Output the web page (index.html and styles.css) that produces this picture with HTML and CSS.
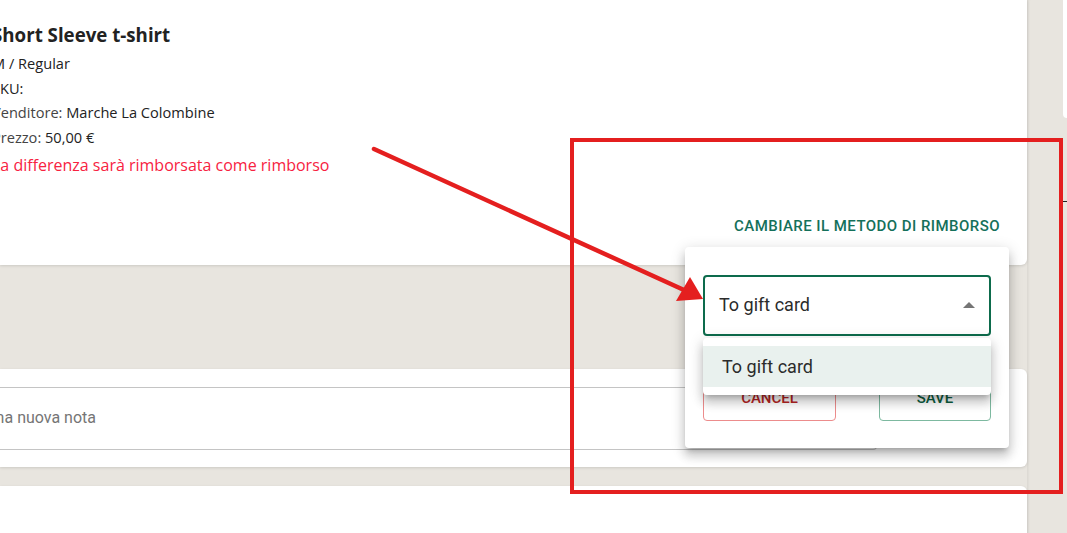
FILE: index.html
```html
<!DOCTYPE html>
<html lang="it">
<head>
    <meta charset="UTF-8">
    <meta name="viewport" content="width=device-width, initial-scale=1.0">
    <title>Reso ordine</title>
    <link rel="stylesheet" href="styles.css">
</head>
<body>
    <div class="page">
        <div class="main">
            <div class="card item-card">
                <div class="item-info">
                    <div class="item-title">Short Sleeve t-shirt</div>
                    <div class="item-line">M / Regular</div>
                    <div class="item-line">SKU:</div>
                    <div class="item-line"><span class="muted">Venditore:</span> Marche La Colombine</div>
                    <div class="item-line"><span class="muted">Prezzo:</span> 50,00 €</div>
                    <div class="item-warn">La differenza sarà rimborsata come rimborso</div>
                </div>
                <div class="item-actions">
                    <button class="link-btn">Cambiare il metodo di rimborso</button>
                </div>
            </div>

            <div class="card note-card">
                <div class="note-input">Aggiungi una nuova nota</div>
            </div>

            <div class="card last-card"></div>
        </div>
        <div class="side">
            <div class="side-panel"></div>
            <div class="side-tick"></div>
        </div>
    </div>

    <!-- popup del metodo di rimborso -->
    <div class="dialog">
        <div class="select">
            <span>To gift card</span>
            <span class="caret"></span>
        </div>
        <div class="dialog-buttons">
            <button class="btn btn-cancel">Cancel</button>
            <button class="btn btn-save">Save</button>
        </div>
        <div class="menu">
            <div class="menu-item">To gift card</div>
        </div>
    </div>

    <!-- annotazione rossa -->
    <svg class="markup" width="1067" height="533" viewBox="0 0 1067 533">
        <rect x="572" y="140" width="489" height="352" fill="none" stroke="#e41f1f" stroke-width="4"/>
        <line x1="374" y1="149" x2="684" y2="290" stroke="#e41f1f" stroke-width="4.5" stroke-linecap="round"/>
        <polygon points="703,299 676,301 690,277" fill="#e41f1f"/>
    </svg>
</body>
</html>
```

FILE: styles.css
```css
body {
    margin: 0;
    background-color: #e8e5df;
    font-family: "Open Sans", Arial, sans-serif;
    overflow: hidden;
}
.page {
    display: flex;
    height: 533px;
}
.main {
    width: 1027px;
    display: flex;
    flex-direction: column;
}
.card {
    background-color: white;
    border-radius: 0 6px 6px 0;
    box-shadow: 0 1px 3px rgba(0, 0, 0, 0.12);
}
.item-card {
    height: 265px;
    box-sizing: border-box;
    padding: 21px 27px 0 0;
    display: flex;
    flex-direction: column;
    border-radius: 0 0 6px 0;
}
.item-info {
    margin-left: -8px;
    color: #222;
}
.item-title {
    font-size: 18.7px;
    font-weight: 700;
    line-height: 28px;
    margin-bottom: 2px;
}
.item-line {
    font-size: 14.6px;
    line-height: 24.7px;
    color: #222;
}
.muted {
    color: #444;
}
.item-warn {
    font-size: 16px;
    line-height: 30px;
    color: #f7223f;
}
.item-actions {
    display: flex;
    justify-content: flex-end;
    margin-top: 37px;
}
.link-btn {
    background: none;
    border: none;
    padding: 0;
    font-family: Roboto, sans-serif;
    font-size: 15px;
    font-weight: 500;
    letter-spacing: 0.45px;
    text-transform: uppercase;
    color: #14705a;
    cursor: pointer;
}
.note-card {
    margin-top: 104px;
    height: 98px;
    box-sizing: border-box;
    padding-top: 18px;
}
.note-input {
    width: 971px;
    margin-left: -94px;
    box-sizing: border-box;
    height: 63px;
    border: 1px solid #c4c4c4;
    border-left: none;
    border-radius: 0 4px 4px 0;
    padding: 0 0 3px 14px;
    display: flex;
    align-items: center;
    font-family: Roboto, sans-serif;
    font-size: 16px;
    color: #757575;
}
.last-card {
    margin-top: 19px;
    flex: 1;
    border-radius: 0 6px 0 0;
}
.side {
    flex: 1;
    position: relative;
    box-shadow: inset 3px 0 3px -2px rgba(0, 0, 0, 0.08);
}
.side-panel {
    margin: 0 0 0 36px;
    height: 118px;
    background-color: white;
    border-radius: 0 0 0 8px;
}
.side-tick {
    position: absolute;
    left: 36px;
    top: 201px;
    width: 6px;
    height: 1px;
    background-color: #222;
}
.dialog {
    position: absolute;
    left: 685px;
    top: 247px;
    width: 324px;
    height: 201px;
    box-sizing: border-box;
    padding: 28px 18px 0;
    background-color: white;
    border-radius: 4px;
    box-shadow: 0 5px 5px -3px rgba(0, 0, 0, 0.2), 0 8px 10px 1px rgba(0, 0, 0, 0.14), 0 3px 14px 2px rgba(0, 0, 0, 0.12);
    font-family: Roboto, sans-serif;
}
.select {
    height: 61px;
    box-sizing: border-box;
    border: 2px solid #0d6b4c;
    border-radius: 4px;
    padding: 0 14px 0 14px;
    display: flex;
    align-items: center;
    justify-content: space-between;
    font-size: 18px;
    color: #2b2b2b;
}
.select span:first-child {
    margin-top: -2px;
}
.caret {
    width: 0;
    height: 0;
    border-left: 6px solid transparent;
    border-right: 6px solid transparent;
    border-bottom: 6px solid #757575;
    margin-top: -2px;
}
.dialog-buttons {
    display: flex;
    justify-content: space-between;
    margin-top: 39px;
}
.btn {
    height: 46px;
    background: white;
    border-radius: 4px;
    font-family: Roboto, sans-serif;
    font-size: 15px;
    font-weight: 500;
    text-transform: uppercase;
    cursor: pointer;
}
.btn-cancel {
    width: 133px;
    border: 1px solid #ec8c8c;
    color: #b52424;
}
.btn-save {
    width: 112px;
    border: 1px solid #7db9a0;
    color: #0d5e40;
}
.menu {
    position: absolute;
    left: 18px;
    top: 91px;
    width: 288px;
    padding: 8px 0;
    background-color: white;
    border-radius: 4px;
    box-shadow: 0 5px 5px -3px rgba(0, 0, 0, 0.2), 0 8px 10px 1px rgba(0, 0, 0, 0.14), 0 3px 14px 2px rgba(0, 0, 0, 0.12);
}
.menu-item {
    height: 41px;
    padding-left: 19px;
    display: flex;
    align-items: center;
    background-color: #e9f1ee;
    font-size: 18px;
    color: #2b2b2b;
}
.markup {
    position: absolute;
    left: 0;
    top: 0;
    pointer-events: none;
}
```
